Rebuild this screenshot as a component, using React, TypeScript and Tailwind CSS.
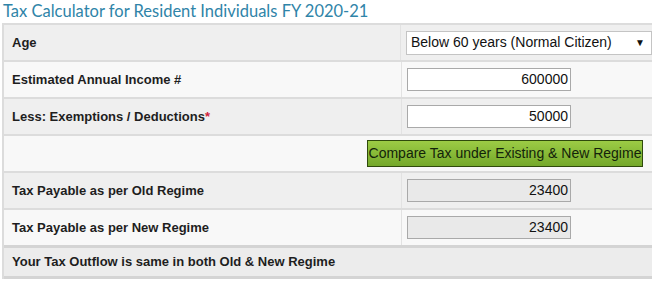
import { ReactNode } from 'react'

function Row({ label, children, shade }: { label?: ReactNode; children?: ReactNode; shade: 'dark' | 'light' }) {
  const bg = shade === 'dark' ? 'bg-[#efefef]' : 'bg-[#f8f8f8]'
  return (
    <div className={`flex h-[37px] border-t-2 border-[#dcdcdc] ${bg}`}>
      <div className="flex w-[398px] items-center border-r border-[#e2e2e2] pl-[8px] text-[13px] font-bold text-[#1e1e1e]">
        {label}
      </div>
      <div className="flex flex-1 items-center pl-[5px]">{children}</div>
    </div>
  )
}

function NumBox({ value, readOnly }: { value: string; readOnly?: boolean }) {
  return (
    <div
      className={`flex h-[23px] w-[164px] items-center justify-end border border-[#a9a9a9] pr-[2px] text-[14px] text-[#111] ${
        readOnly ? 'bg-[#e9e9e9]' : 'bg-white'
      }`}
    >
      {value}
    </div>
  )
}

export default function App() {
  return (
    <div className="h-[282px] w-[660px] overflow-hidden bg-white font-['Liberation_Sans',Arial,sans-serif]">
      <h1 className="h-[23px] pl-[3px] font-['Lato','Open_Sans',sans-serif] text-[16.5px] leading-[22px] text-[#2f84a8]">
        Tax Calculator for Resident Individuals FY 2020-21
      </h1>
      <div className="ml-[2px] w-[650px] border-l-2 border-[#dcdcdc]">
        <Row label="Age" shade="dark">
          <div className="flex h-[24px] w-[246px] items-center justify-between border border-[#c4c4c4] bg-white pl-[4px] pr-[6px] text-[14px] text-[#111]">
            <span>Below 60 years (Normal Citizen)</span>
            <span className="text-[10px]">▼</span>
          </div>
        </Row>
        <Row label="Estimated Annual Income #" shade="light">
          <NumBox value="600000" />
        </Row>
        <Row
          label={
            <>
              Less: Exemptions / Deductions<span className="text-[#d01f3c]">*</span>
            </>
          }
          shade="dark"
        >
          <NumBox value="50000" />
        </Row>
        <div className="flex h-[37px] items-center border-t-2 border-[#dcdcdc] bg-[#f8f8f8] pl-[363px]">
          <button className="h-[27px] w-[276px] border border-[#2f4a0c] bg-gradient-to-b from-[#9ccc45] to-[#74a82a] text-[14px] text-[#13230a]">
            Compare Tax under Existing &amp; New Regime
          </button>
        </div>
        <Row label="Tax Payable as per Old Regime" shade="dark">
          <NumBox value="23400" readOnly />
        </Row>
        <Row label="Tax Payable as per New Regime" shade="light">
          <NumBox value="23400" readOnly />
        </Row>
        <div className="flex h-[34px] items-center border-y-[3px] border-[#d4d4d4] bg-[#ececec] pl-[8px] text-[13px] font-bold text-[#1e1e1e]">
          Your Tax Outflow is same in both Old &amp; New Regime
        </div>
      </div>
    </div>
  )
}
